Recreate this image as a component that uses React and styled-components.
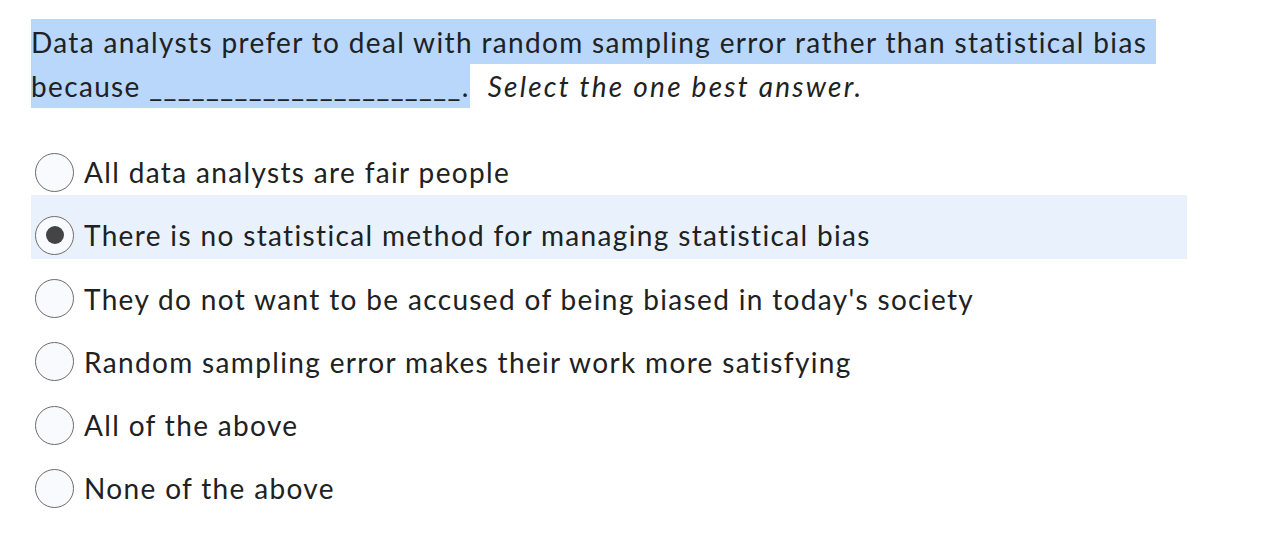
import React from "react";
import styled, { createGlobalStyle } from "styled-components";

const Global = createGlobalStyle`
  html, body { margin: 0; padding: 0; background: #ffffff; }
  body { font-family: Lato, "Noto Sans", sans-serif; color: #202122; }
`;

const Page = styled.div`
  padding: 19px 0 0 31px;
  width: 1156px;
`;

const Question = styled.p`
  margin: 0;
  font-size: 28px;
  line-height: 44.5px;
  letter-spacing: 1.35px;
`;

const Highlight = styled.span`
  background: #b9d6fb;
  padding: 5.5px 0;
`;

const Instruction = styled.em`
  font-style: italic;
  letter-spacing: 2.25px;
  margin-left: 18px;
`;

const Options = styled.div`
  display: flex;
  flex-direction: column;
  margin-top: 24px;
`;

const Row = styled.label`
  display: flex;
  align-items: center;
  gap: 10px;
  padding: 18px 4px 1.3px;
  font-size: 28px;
  line-height: 44px;
  letter-spacing: 1.35px;
  background: ${(p) => (p.$selected ? "#e9f2fc" : "transparent")};
`;

const Radio = styled.span`
  flex: 0 0 auto;
  box-sizing: border-box;
  width: 39px;
  height: 39px;
  border-radius: 50%;
  border: 1.3px solid #6c6c6c;
  background: #f9fafd;
  display: flex;
  align-items: center;
  justify-content: center;
  &::after {
    content: "";
    display: ${(p) => (p.$checked ? "block" : "none")};
    width: 18px;
    height: 18px;
    border-radius: 50%;
    background: #444446;
  }
`;

const options = [
  "All data analysts are fair people",
  "There is no statistical method for managing statistical bias",
  "They do not want to be accused of being biased in today's society",
  "Random sampling error makes their work more satisfying",
  "All of the above",
  "None of the above",
];

export default function App() {
  const selected = 1;
  return (
    <Page>
      <Global />
      <Question>
        <Highlight>
          {"Data analysts prefer to deal with random sampling error rather than statistical bias\u00a0 because ______________________."}
        </Highlight>
        <Instruction>Select the one best answer.</Instruction>
      </Question>
      <Options>
        {options.map((o, i) => (
          <Row key={i} $selected={i === selected}>
            <Radio $checked={i === selected} />
            <span>{o}</span>
          </Row>
        ))}
      </Options>
    </Page>
  );
}
